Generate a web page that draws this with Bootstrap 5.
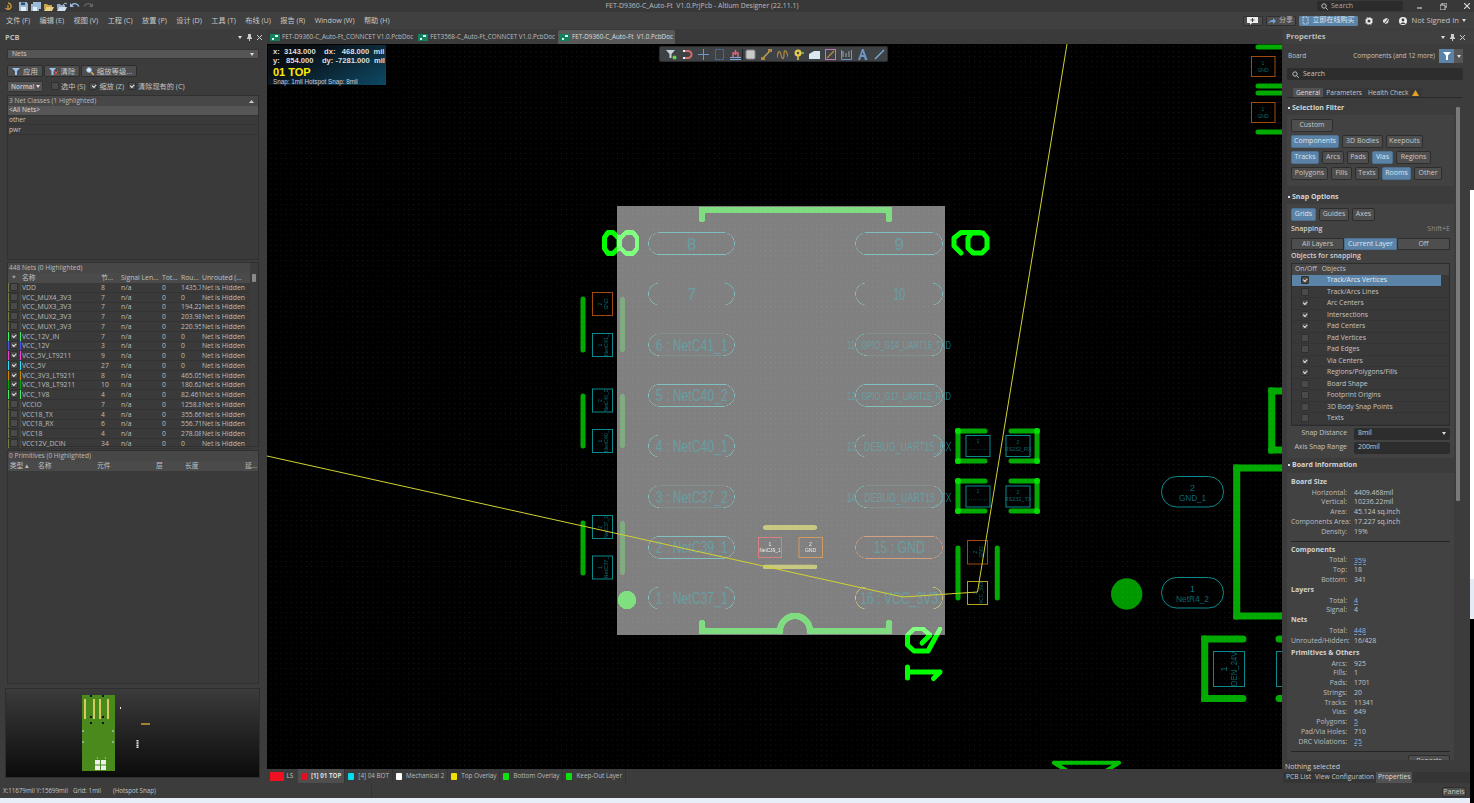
<!DOCTYPE html>
<html lang="zh">
<head>
<meta charset="UTF-8">
<title>FET-D9360-C_Auto-Ft V1.0.PrjPcb - Altium Designer</title>
<link rel="stylesheet" href="https://cdn.jsdelivr.net/npm/bootstrap@5.3.3/dist/css/bootstrap.min.css">
<script src="https://cdn.jsdelivr.net/npm/bootstrap@5.3.3/dist/js/bootstrap.bundle.min.js"></script>
<style>
html,body{width:1474px;height:803px;overflow:hidden;background:#3c3c3c}
body{font-family:"Open Sans","Noto Sans CJK SC",sans-serif;font-size:7px;line-height:1.2;color:#c4c4c4;position:relative}
svg{display:block;flex:none}
.title-bar{height:12px;background:#383838}
.quick-icons{width:100px;padding-left:4px;gap:3px}
.title-text{width:1134px;padding-left:70px;color:#bdbdbd;font-size:6.9px;white-space:pre}
.search-top{width:86px;height:10px;margin-left:83px;background:#2c2c2c;border-radius:2px;padding-left:4px;gap:3px;color:#aaa}
.win-btns{margin-left:14px;gap:17px}
.menu-bar{height:17px;background:#404040;padding-left:6px}
.menu-item{margin-right:9.4px;font-size:7.2px;white-space:nowrap;color:#c8c8c8}
.top-actions{margin-right:8px}
.tb-btn{height:10px;background:#4d4d4d;border:1px solid #2f2f2f;border-radius:1px;gap:3px;color:#bbb;justify-content:center;white-space:nowrap}
.tb-chat{width:20px;margin-right:3px}
.tb-share{width:30px;margin-right:3px}
.tb-buy{background:#5b83a8;border-color:#5b83a8;width:59px;margin-right:7px;color:#dbe5ee;gap:4px}
.act-gap{margin-right:9px}
.user-name{font-size:7.6px;margin-left:5px;margin-right:3px}
.main-area{height:754px}
.left-panel{width:265px;padding:1px 6px 5px 7px;background:#3c3c3c;margin-right:2px}
.panel-title{height:14px;margin:0 -6px 0 -2px;padding:0 3px 0 0;font-weight:700;color:#bbb;font-size:7.5px}
.panel-icons{gap:5px}
.dark-select{height:10px;margin-top:5px;background:#555;border:1px solid #333;border-radius:1px;padding:0 4px;color:#ccc;font-size:6.8px}
.caret-d{width:0;height:0;border:2.5px solid transparent;border-top:3px solid #ddd;border-bottom:0;flex:none}
.ad-btn{--bs-btn-padding-x:0;--bs-btn-padding-y:0;--bs-btn-font-size:7px;--bs-btn-line-height:1.2;--bs-btn-color:#c8c8c8;--bs-btn-bg:#4e4e4e;--bs-btn-border-color:#2d2d2d;--bs-btn-border-radius:2px;--bs-btn-font-weight:400;height:13px;white-space:nowrap;display:inline-flex;align-items:center;justify-content:center;flex:none}
.ad-blue{--bs-btn-bg:#5b83a8;--bs-btn-border-color:#4d7090;--bs-btn-color:#dde6ee}
.bw-21{width:21px}.bw-22{width:22px}.bw-23{width:23px}.bw-24{width:24px}.bw-25{width:25px}.bw-28{width:28px}.bw-29{width:29px}.bw-30{width:30px}.bw-35{width:35px}.bw-36{width:36px}.bw-37{width:37px}.bw-41{width:41px}.bw-42{width:42px}.bw-48{width:48px}.bw-56{width:56px}.bw-59{width:59px}.bw-60{width:60px}
.net-btns{margin-top:6px;gap:1px}
.net-btns .ad-btn{height:12px;gap:3px;font-size:7.4px}
.opt-row{height:11px;margin-top:4px}
.opt-row .dark-select{margin-top:0;width:36px;height:11px;font-weight:600;font-size:6.4px;padding:0 2px 0 3px}
.chk{width:8px;height:8px;background:#4a4a4a;border:1px solid #2f2f2f;border-radius:1px;position:relative;display:block;flex:none}
.chk.on::after{content:"";position:absolute;left:1.2px;top:1px;width:4.4px;height:2.6px;border-left:1px solid #e4e4e4;border-bottom:1px solid #e4e4e4;transform:rotate(-45deg)}
.opt-item{gap:2px;white-space:nowrap;font-size:7.2px}
.list-box{background:#3a3a3a;border:1px solid #303030}
.list-head{height:10px;padding-left:1px;background:#474747;font-size:6.6px;color:#bbb}
.classes-box{height:165px;margin-top:3px}
.class-row{height:9.7px;padding-left:1px;border-bottom:1px solid #333;font-size:6.6px}
.class-row.sel{background:#565656;color:#ddd}
.nets-box{height:185px;margin-top:2px;position:relative;padding-right:8px}
.col-head{height:10px;background:#4a4a4a;font-size:6.8px;color:#c0c0c0}
.col-head span,.net-row span{flex:none;white-space:nowrap;overflow:hidden;line-height:1.35}
.net-row{height:9.75px;border-bottom:1px solid #333;font-size:6.8px;color:#bdbdbd}
.c0{width:14px}.c1{width:79px}.c2{width:20px}.c3{width:41px}.c4{width:19px}.c5{width:20px;margin-right:1px}.c6{width:47px}
.net-swatch{width:13px;height:9px;margin-right:1px;padding:0 .5px;border-left:1.5px solid #78784a;border-right:1.5px solid #4a4a3a;display:block;flex:none}
.s-green{border-color:#45ee66}.s-blue{border-color:#4c55e0}.s-pink{border-color:#ee44cc}.s-cyan{border-color:#33ddee}.s-orange{border-color:#cc8800}.s-dgreen{border-color:#00aa00}
.net-scroll{position:absolute;right:0;top:0;width:8px;height:100%;background:#3c3c3c}
.net-scroll::after{content:"";position:absolute;left:2px;top:11px;width:4px;height:8px;background:#8a8a8a;border-radius:1px}
.prims-box{height:234px;margin-top:3px}
.preview-box{height:90px;margin:4px -1px 0 -2px;background:linear-gradient(#3b3b3b,#0b0b0b);border:1px solid #2e2e2e}
.center-col{width:1015px}
.doc-tabs{height:15px;background:#3a3a3a;padding:1px 0 0 1px;gap:1px}
.doc-tab{height:14px;padding:0 2px;gap:2px;font-size:6.3px;white-space:pre;color:#bcbcbc}
.doc-tab.sel{background:#585858;color:#ddd;border-radius:2px 2px 0 0}
.pcb-wrap{height:725px;background:#000;position:relative;overflow:hidden}
.pcb-canvas{isolation:isolate}
.comp-shade{mix-blend-mode:lighten}
.pcb-canvas text{font-family:"Liberation Sans",sans-serif;text-anchor:middle}
.hud{position:absolute;left:1px;top:1px;width:118px;height:40px;background:linear-gradient(150deg,#0a0d12 25%,#0d4a66);padding:3px 5px;color:#ddd;font-family:"Liberation Sans",sans-serif;font-weight:700;font-size:7.6px;line-height:1.1}
.hud-row{height:9px;white-space:pre}
.hud-layer{color:#ffea00;font-size:11px;height:11px}
.hud-snap{font-size:6.3px;font-weight:400;margin-top:2px;color:#ccd}
.pcb-tools{position:absolute;left:392px;top:2px;width:229px;height:16px;background:#3f4245;border:1px solid #2b2b2b;border-radius:2px;padding-left:3px}
.tool-slot{width:16.35px;display:flex;justify-content:center}
.tool-sep{width:1px;height:11px;background:#222;margin:0 -1px}
.layer-bar{height:14px;background:#3c3c3c;padding-left:3px}
.ls-tab{height:14px;gap:3px;width:28px;font-size:6.4px;white-space:nowrap}
.layer-tab{height:14px;padding:0 3px;gap:4px;white-space:nowrap;font-size:6.3px;border-right:1px solid #333;color:#bbb}
.layer-tab.sel{background:#4e4e4e;color:#ddd;font-weight:700;font-size:6.2px}
.layer-mark{width:6px;height:7px;border-radius:1px;display:block}
.ls-mark{width:13.5px;height:9px;background:#ee1122;display:block}
.right-panel{width:191px;padding:1px 0 0 0;margin-left:1px;background:#3c3c3c;position:relative}
.rp-title{height:14px;padding:0 9px 0 3px;font-weight:700;font-size:7.6px;color:#bbb;background:#404040}
.rp-row{padding:0 11px 0 5px}
.board-row{height:14px;margin-top:5px;font-size:6.4px}
.filter-split{width:24px;height:14px;margin-left:4px}
.filter-a{width:15px;height:14px;background:#5b83a8}
.filter-b{width:9px;height:14px;background:#555}
.search-box{height:12px;margin:5px 11px 0 4px;background:#2d2d2d;border-radius:2px;padding-left:5px;gap:4px}
.rp-tabs{height:10px;margin:8px 12px 0 4px;padding-left:6px;border-bottom:1px solid #2a2a2a}
.rp-tab{height:9px;padding:0 3px;font-size:6.6px;background:#383838;gap:3px;white-space:nowrap}
.rp-tab.sel{background:#525252;color:#ddd}
.sec-head{height:10px;padding-left:5px;gap:2px;font-weight:700;color:#d4d4d4;font-size:7px}
.sec-tick{width:2px;height:2px;background:#ddd;display:block}
.sec-box{width:167px;margin-left:4px;background:#424242;padding:4px}
.sel-head{margin-top:5px}
.sel-box{height:71px;margin-top:2px}
.snap-head-line{margin-top:6px}
.snap-box{height:254px;margin-top:2px}
.info-head-line{margin-top:2px}
.btn-line{gap:3px;margin-bottom:3px}
.seg-line .ad-btn{flex:1 1 0;border-radius:0;height:12px}
.opt-label{font-weight:600;color:#d0d0d0;height:9px}
.objects-label{margin-top:2px}
.snap-table{border:1px solid #2c2c2c;background:#393939;margin-top:2px}
.snap-head{height:11px;background:#464646;padding-left:3px;gap:5px;font-size:6.8px}
.snap-row{height:11.5px;border-bottom:1px solid #343434;font-size:6.8px;position:relative}
.snap-row.sel{background:#5b83a8;color:#e6eef4;margin-right:8px}
.snap-cell{width:26px;display:flex;justify-content:center}
.snap-name{padding-left:9px}
.field-line{height:12px;margin-top:2px;font-size:6.9px}
.field-label{width:56px;text-align:right;margin-right:7px;flex:none;white-space:nowrap}
.field-input{width:96px;height:12px;background:#2d2d2d;border-radius:2px;padding:0 4px;color:#ccc}
.info-box{width:167px;height:287px;margin:3px 0 0 4px;background:#424242;padding:4px;overflow:hidden}
.info-head{height:10px;margin-bottom:1px;font-weight:700;color:#d2d2d2}
.info-head-wide{margin-top:2px}
.info-row{height:9.75px;font-size:6.9px}
.info-key{width:56px;text-align:right;margin-right:7px;flex:none;white-space:nowrap;color:#bdbdbd}
.info-link{color:#8db4de;border-bottom:1px dashed #6c93bd;line-height:7px}
.info-rule{border-top:1px solid #252525;margin:4px 0 3px}
.reports-btn{width:42px;height:12px;margin:1px 0 0 117px;display:flex}
.rp-foot{height:9px;margin-top:3px;padding-left:2px;color:#ccc}
.rp-ftabs{height:11px;background:#353535;padding-left:1px}
.rp-ftab{height:11px;padding:0 2px;font-size:6.7px;white-space:nowrap}
.rp-ftab.sel{background:#525252;color:#ddd}
.rp-scroll{position:absolute;left:173px;top:78px;width:4px;height:394px;background:#7a7a7a;border-radius:1px}
.shift-hint{color:#8e8e8e;font-weight:400}
.status-bar{height:15px;background:#3c3c3c;padding-left:3px;position:relative;font-size:6.2px}
.status-grid{margin-left:5px}
.status-snap{margin-left:12px}
.status-sep{position:absolute;left:371px;top:1px;width:1px;height:14px;background:#333}
.panels-btn{position:absolute;left:1442px;top:4px;width:24px;height:10px}
.bottom-strip{height:5px;background:#e8eef7}
.side-sliver{position:absolute;left:1470px;top:190px;width:4px;height:613px;background:linear-gradient(#fff 0,#fff 389px,#e4ebf5 389px,#e4ebf5 429px,#000 429px)}
.mark-red{background:#e01020}.mark-cyan{background:#00ddee}.mark-white{background:#fff}.mark-yellow{background:#f0e000}.mark-green{background:#10e010}
</style>
</head>
<body>
<header class="title-bar d-flex align-items-center">
  <div class="quick-icons d-flex align-items-center">
    <svg width="8" height="9" viewBox="0 0 8 9"><path d="M4 1a3.2 3.2 0 1 1-2.6 5.2M4 3v4.5" fill="none" stroke="#d09a3c" stroke-width="1.3"/></svg>
    <svg class="ms-1" width="9" height="9" viewBox="0 0 9 9"><path d="M0 0h7.5L9 1.5V9H0z" fill="#9cb9d8"/><rect x="2" y="0.5" width="4" height="2.5" fill="#35506e"/><rect x="2" y="5" width="5" height="4" fill="#e6edf4"/></svg>
    <svg width="10" height="9" viewBox="0 0 10 9"><path d="M2 0h8v7H8v2H0V2h2z" fill="#9cb9d8"/><rect x="2" y="5" width="4" height="4" fill="#e6edf4"/></svg>
    <svg width="10" height="9" viewBox="0 0 10 9"><path d="M0 2h3l1 1h4v2H2L0 8z" fill="#c9a54c"/><path d="M2 5h8L8 9H0z" fill="#e8cf86"/></svg>
    <svg width="10" height="9" viewBox="0 0 10 9"><path d="M0 2h3l1 1h4v2H2L0 8z" fill="#8fa9c4"/><path d="M2 5h8L8 9H0z" fill="#cfe0ef"/><path d="M6 3l2-2 2 1" stroke="#9cb9d8" fill="none"/></svg>
    <svg width="10" height="8" viewBox="0 0 10 8"><path d="M1.500 3.500C3 .8 7 .8 9 4.500" fill="none" stroke="#9cc0e4" stroke-width="1.400"/><path d="M0 1v4h4z" fill="#9cc0e4"/></svg>
    <svg width="10" height="8" viewBox="0 0 10 8"><path d="M8.500 3.500C7 .8 3 .8 1 4.500" fill="none" stroke="#666" stroke-width="1.400"/><path d="M10 1v4H6z" fill="#666"/></svg>
  </div>
  <div class="title-text text-center">FET-D9360-C_Auto-Ft  V1.0.PrjPcb - Altium Designer (22.11.1)</div>
  <div class="search-top d-flex align-items-center">
    <svg width="7" height="7" viewBox="0 0 7 7"><circle cx="3" cy="3" r="2.200" fill="none" stroke="#bbb"/><path d="M4.600 4.600 6.800 6.800" stroke="#bbb"/></svg>Search
  </div>
  <div class="win-btns d-flex align-items-center">
    <svg width="6" height="6" viewBox="0 0 6 6"><path d="M0 5h5" stroke="#ccc" stroke-width="1.200"/></svg>
    <svg width="7" height="7" viewBox="0 0 7 7"><path d="M2 2V0h5v4H5M0 2h5v5H0z" fill="none" stroke="#ccc"/></svg>
    <svg width="6" height="6" viewBox="0 0 6 6"><path d="M0 0l6 6M6 0L0 6" stroke="#ddd" stroke-width="1.100"/></svg>
  </div>
</header>

<nav class="menu-bar d-flex align-items-center">
  <span class="menu-item">文件 (F)</span><span class="menu-item">编辑 (E)</span><span class="menu-item">视图 (V)</span><span class="menu-item">工程 (C)</span><span class="menu-item">放置 (P)</span><span class="menu-item">设计 (D)</span><span class="menu-item">工具 (T)</span><span class="menu-item">布线 (U)</span><span class="menu-item">报告 (R)</span><span class="menu-item">Window (W)</span><span class="menu-item">帮助 (H)</span>
  <div class="top-actions d-flex align-items-center ms-auto">
    <span class="tb-btn tb-chat d-flex align-items-center"><svg width="11" height="8" viewBox="0 0 11 8"><path d="M0 0h11v6H5L3 8V6H0z" fill="#eee"/><path d="M5.500 1v4M3.500 3h4" stroke="#444"/></svg></span>
    <span class="tb-btn tb-share d-flex align-items-center"><svg width="8" height="6" viewBox="0 0 8 6"><path d="M0 6C1 3 3 2 5 2V0l3 3-3 3V4C3 4 1 4 0 6z" fill="#6fa6e0"/></svg>分享</span>
    <span class="tb-btn tb-buy d-flex align-items-center"><svg width="7" height="9" viewBox="0 0 7 9"><path d="M1 1h5v7H1z" fill="none" stroke="#cfe0ef" stroke-dasharray="1.500 1"/></svg>立即在线购买</span>
    <svg class="act-gap" width="8" height="8" viewBox="0 0 8 8"><circle cx="4" cy="4" r="2.400" fill="none" stroke="#eee" stroke-width="1.800"/><circle cx="4" cy="4" r="3.900" fill="none" stroke="#eee" stroke-width=".8" stroke-dasharray="1.500 1.500"/></svg>
    <svg class="act-gap" width="8" height="8" viewBox="0 0 8 8"><path d="M1 3l3-2 3 1-1 4-3 1-2-2z" fill="#ddd"/><path d="M2 7l5-6" stroke="#3f3f3f"/></svg>
    <svg width="8" height="8" viewBox="0 0 8 8"><circle cx="4" cy="4" r="4" fill="#eee"/><circle cx="4" cy="3" r="1.400" fill="#404040"/><path d="M1.500 7C2 5 6 5 6.500 7z" fill="#404040"/></svg>
    <span class="user-name">Not Signed In</span>
    <span class="caret-d"></span>
  </div>
</nav>

<div class="main-area d-flex">
  <aside class="left-panel d-flex flex-column">
    <div class="panel-title d-flex align-items-center justify-content-between">
      <span>PCB</span>
      <span class="panel-icons d-flex align-items-center">
        <span class="caret-d"></span>
        <svg width="5" height="7" viewBox="0 0 5 7"><path d="M1 0h3v3l1 1v1H3v2H2V5H0V4l1-1z" fill="#ccc"/></svg>
        <svg width="5" height="5" viewBox="0 0 5 5"><path d="M0 0l5 5M5 0L0 5" stroke="#ccc"/></svg>
      </span>
    </div>
    <div class="dark-select d-flex align-items-center justify-content-between"><span>Nets</span><span class="caret-d"></span></div>
    <div class="net-btns d-flex">
      <button type="button" class="btn ad-btn bw-36"><svg width="8" height="7" viewBox="0 0 8 7"><path d="M0 0h8L5 3v4H3V3z" fill="#9cc4ec"/></svg>应用</button>
      <button type="button" class="btn ad-btn bw-36"><svg width="9" height="7" viewBox="0 0 9 7"><path d="M0 0h7L4.500 3v4h-2V3z" fill="#9cc4ec"/><path d="M5 3l4 4M9 3L5 7" stroke="#e05050"/></svg>清除</button>
      <button type="button" class="btn ad-btn bw-56"><svg width="8" height="8" viewBox="0 0 8 8"><circle cx="3" cy="3" r="2.300" fill="#dfeaf5" stroke="#9cc4ec"/><path d="M5 5l3 3" stroke="#e0b050" stroke-width="1.400"/></svg>缩放等级...</button>
    </div>
    <div class="opt-row d-flex align-items-center gap-1">
      <div class="dark-select d-flex align-items-center justify-content-between"><span>Normal</span><span class="caret-d"></span></div>
      <span class="opt-item ms-1 d-flex align-items-center"><i class="chk"></i>选中 (S)</span>
      <span class="opt-item d-flex align-items-center"><i class="chk on"></i>缩放 (Z)</span>
      <span class="opt-item d-flex align-items-center"><i class="chk on"></i>清除现有的 (C)</span>
    </div>
    <div class="list-box classes-box">
      <div class="list-head d-flex align-items-center justify-content-between pe-1"><span>3 Net Classes (1 Highlighted)</span><svg width="5" height="3" viewBox="0 0 5 3"><path d="M2.500 0 5 3H0z" fill="#ccc"/></svg></div>
      <div class="class-row sel d-flex align-items-center">&lt;All Nets&gt;</div>
      <div class="class-row d-flex align-items-center">other</div>
      <div class="class-row d-flex align-items-center">pwr</div>
    </div>
    <div class="list-box nets-box">
      <div class="list-head d-flex align-items-center">448 Nets (0 Highlighted)</div>
      <div class="col-head d-flex align-items-center"><span class="c0 ps-1">*</span><span class="c1">名称</span><span class="c2">节...</span><span class="c3">Signal Len...</span><span class="c4">Tot...</span><span class="c5">Rou...</span><span class="c6">Unrouted (...</span></div>
      <div class="net-row d-flex align-items-center"><i class="net-swatch"><i class="chk"></i></i><span class="c1">VDD</span><span class="c2">8</span><span class="c3">n/a</span><span class="c4">0</span><span class="c5">1435.7</span><span class="c6">Net is Hidden</span></div>
      <div class="net-row d-flex align-items-center"><i class="net-swatch"><i class="chk"></i></i><span class="c1">VCC_MUX4_3V3</span><span class="c2">7</span><span class="c3">n/a</span><span class="c4">0</span><span class="c5">0</span><span class="c6">Net is Hidden</span></div>
      <div class="net-row d-flex align-items-center"><i class="net-swatch"><i class="chk"></i></i><span class="c1">VCC_MUX3_3V3</span><span class="c2">7</span><span class="c3">n/a</span><span class="c4">0</span><span class="c5">194.22</span><span class="c6">Net is Hidden</span></div>
      <div class="net-row d-flex align-items-center"><i class="net-swatch"><i class="chk"></i></i><span class="c1">VCC_MUX2_3V3</span><span class="c2">7</span><span class="c3">n/a</span><span class="c4">0</span><span class="c5">203.98</span><span class="c6">Net is Hidden</span></div>
      <div class="net-row d-flex align-items-center"><i class="net-swatch"><i class="chk"></i></i><span class="c1">VCC_MUX1_3V3</span><span class="c2">7</span><span class="c3">n/a</span><span class="c4">0</span><span class="c5">220.95</span><span class="c6">Net is Hidden</span></div>
      <div class="net-row d-flex align-items-center"><i class="net-swatch s-green"><i class="chk on"></i></i><span class="c1">VCC_12V_IN</span><span class="c2">7</span><span class="c3">n/a</span><span class="c4">0</span><span class="c5">0</span><span class="c6">Net is Hidden</span></div>
      <div class="net-row d-flex align-items-center"><i class="net-swatch s-blue"><i class="chk on"></i></i><span class="c1">VCC_12V</span><span class="c2">3</span><span class="c3">n/a</span><span class="c4">0</span><span class="c5">0</span><span class="c6">Net is Hidden</span></div>
      <div class="net-row d-flex align-items-center"><i class="net-swatch s-pink"><i class="chk on"></i></i><span class="c1">VCC_5V_LT9211</span><span class="c2">9</span><span class="c3">n/a</span><span class="c4">0</span><span class="c5">0</span><span class="c6">Net is Hidden</span></div>
      <div class="net-row d-flex align-items-center"><i class="net-swatch s-cyan"><i class="chk on"></i></i><span class="c1">VCC_5V</span><span class="c2">27</span><span class="c3">n/a</span><span class="c4">0</span><span class="c5">0</span><span class="c6">Net is Hidden</span></div>
      <div class="net-row d-flex align-items-center"><i class="net-swatch s-orange"><i class="chk on"></i></i><span class="c1">VCC_3V3_LT9211</span><span class="c2">8</span><span class="c3">n/a</span><span class="c4">0</span><span class="c5">465.05</span><span class="c6">Net is Hidden</span></div>
      <div class="net-row d-flex align-items-center"><i class="net-swatch s-dgreen"><i class="chk on"></i></i><span class="c1">VCC_1V8_LT9211</span><span class="c2">10</span><span class="c3">n/a</span><span class="c4">0</span><span class="c5">180.62</span><span class="c6">Net is Hidden</span></div>
      <div class="net-row d-flex align-items-center"><i class="net-swatch s-green"><i class="chk on"></i></i><span class="c1">VCC_1V8</span><span class="c2">4</span><span class="c3">n/a</span><span class="c4">0</span><span class="c5">82.461</span><span class="c6">Net is Hidden</span></div>
      <div class="net-row d-flex align-items-center"><i class="net-swatch"><i class="chk"></i></i><span class="c1">VCCIO</span><span class="c2">7</span><span class="c3">n/a</span><span class="c4">0</span><span class="c5">1258.8</span><span class="c6">Net is Hidden</span></div>
      <div class="net-row d-flex align-items-center"><i class="net-swatch"><i class="chk"></i></i><span class="c1">VCC18_TX</span><span class="c2">4</span><span class="c3">n/a</span><span class="c4">0</span><span class="c5">355.66</span><span class="c6">Net is Hidden</span></div>
      <div class="net-row d-flex align-items-center"><i class="net-swatch"><i class="chk"></i></i><span class="c1">VCC18_RX</span><span class="c2">6</span><span class="c3">n/a</span><span class="c4">0</span><span class="c5">556.71</span><span class="c6">Net is Hidden</span></div>
      <div class="net-row d-flex align-items-center"><i class="net-swatch"><i class="chk"></i></i><span class="c1">VCC18</span><span class="c2">4</span><span class="c3">n/a</span><span class="c4">0</span><span class="c5">278.08</span><span class="c6">Net is Hidden</span></div>
      <div class="net-row d-flex align-items-center"><i class="net-swatch"><i class="chk"></i></i><span class="c1">VCC12V_DCIN</span><span class="c2">34</span><span class="c3">n/a</span><span class="c4">0</span><span class="c5">0</span><span class="c6">Net is Hidden</span></div>
      <div class="net-scroll"></div>
    </div>
    <div class="list-box prims-box">
      <div class="list-head d-flex align-items-center">0 Primitives (0 Highlighted)</div>
      <div class="col-head d-flex align-items-center"><span class="bw-30">&nbsp;类型 ▴</span><span class="bw-59">名称</span><span class="bw-59">元件</span><span class="bw-29">层</span><span class="bw-60">长度</span><span>延...</span></div>
    </div>
    <div class="preview-box">
      <svg width="252" height="88" viewBox="6 689 252 88">
        <rect x="82" y="695" width="33" height="76" fill="#4a8a1c"/>
        <path d="M85 699v20M94 699v20M100 699v20M108 699v20" stroke="#d8c860" stroke-width="2"/>
        <path d="M91 695v2M103 695v2M91 716v2M103 716v2M91 722v2M103 722v2" stroke="#111" stroke-width="2"/>
        <rect x="95" y="760" width="11" height="10" fill="#eee"/>
        <path d="M95 765h11M100.500 760v10" stroke="#4a8a1c"/>
        <path d="M82 731h2M82 742h2M112 731h2M112 742h2M97 758h1M105 758h1" stroke="#cde" stroke-width="1"/>
        <path d="M141 724h9" stroke="#d0a030" stroke-width="1.500"/>
        <path d="M137.500 740v8" stroke="#eee" stroke-width="2" stroke-dasharray="1.500 .7"/>
        <rect x="120" y="707" width="1" height="2" fill="#eee"/>
      </svg>
    </div>
  </aside>

  <main class="center-col d-flex flex-column">
    <div class="doc-tabs d-flex">
      <div class="doc-tab d-flex align-items-center"><svg width="10" height="7" viewBox="0 0 10 7"><rect width="10" height="7" fill="#14805e"/><rect x="5" y="1" width="3" height="2" fill="#cfe"/><rect x="2" y="4" width="2" height="2" fill="#cfe"/></svg>FET-D9360-C_Auto-Ft_CONNCET V1.0.PcbDoc</div>
      <div class="doc-tab d-flex align-items-center"><svg width="10" height="7" viewBox="0 0 10 7"><rect width="10" height="7" fill="#14805e"/><rect x="5" y="1" width="3" height="2" fill="#cfe"/><rect x="2" y="4" width="2" height="2" fill="#cfe"/></svg>FET3568-C_Auto-Ft_CONNCET V1.0.PcbDoc</div>
      <div class="doc-tab sel d-flex align-items-center"><svg width="10" height="7" viewBox="0 0 10 7"><rect width="10" height="7" fill="#14805e"/><rect x="5" y="1" width="3" height="2" fill="#cfe"/><rect x="2" y="4" width="2" height="2" fill="#cfe"/></svg>FET-D9360-C_Auto-Ft  V1.0.PcbDoc</div>
    </div>
    <div class="pcb-wrap">
      <svg class="pcb-canvas" width="1015" height="725" viewBox="267 44 1015 725">
        <defs>
          <pattern id="gridDots" width="5.100" height="5.100" patternUnits="userSpaceOnUse"><rect width="1" height="1" fill="#fff" fill-opacity=".09"/></pattern>
          <linearGradient id="labelFill" gradientUnits="userSpaceOnUse" x1="617" y1="0" x2="1282" y2="0">
            <stop offset="0" stop-color="#689fa3"/><stop offset=".4932" stop-color="#689fa3"/><stop offset=".4932" stop-color="#0c6a70"/><stop offset="1" stop-color="#0c6a70"/>
          </linearGradient>
        </defs>
        <rect x="267" y="44" width="1015" height="725" fill="#000"/>

        <!-- silkscreen under the highlighted part -->
        <g fill="none" stroke="#00dc00" stroke-width="7" stroke-linecap="round">
          <path d="M702 219V210H889V219"/>
          <path d="M702 623V631H780M810 631H889V623"/>
          <path d="M780 631A15 15 0 0 1 810 631"/>
        </g>
        <circle cx="627" cy="600" r="9.500" fill="#00e000"/>
        <g fill="none" stroke="#c8c800" stroke-width="5" stroke-linecap="round">
          <path d="M765 527.500H815M765 566.700H815"/>
        </g>
        <g fill="none" stroke="#00ff00" stroke-width="5" stroke-linejoin="round" stroke-linecap="round">
          <path d="M608 232.500h5l6 6v9l-6 6h-5l-3.500-5v-11zM626 232.500h7l4 5v11l-4 5h-7l-6-6v-9z"/>
          <path d="M980 232.500H961L954 238V246L961 253M972 233H983L987 238V248L982 253H973L968 248V238Z"/>
          <path d="M940 629 928 651H914L907.500 645V635L914 629H923L930 635 922 643M907.500 667V678M907.500 672H940M940 672 933.500 678.500"/>
        </g>
        <g fill="none" stroke="#00aa00" stroke-width="5" stroke-linecap="round">
          <path d="M583 299V350M622.500 299V350M583 396V446M622.500 396V446M583 523V573M622.500 523V573"/>
          <path d="M958 548V598M997.300 548V598"/>
          <path d="M985 431H958V461H985M985 481H958V511H985M1011 431H1037V461H1011M1011 481H1037V511H1011"/>
          <path d="M1258 47H1282M1258 86H1282M1258 93H1282M1258 132H1282"/>
        </g>
        <g fill="#00e000">
          <circle cx="958" cy="431" r="3"/><circle cx="958" cy="461" r="3"/><circle cx="958" cy="481" r="3"/><circle cx="958" cy="511" r="3"/>
          <circle cx="1037" cy="431" r="3"/><circle cx="1037" cy="461" r="3"/><circle cx="1037" cy="481" r="3"/><circle cx="1037" cy="511" r="3"/>
          <circle cx="1236.700" cy="468" r="3.500"/><circle cx="1236.700" cy="616" r="3.500"/><circle cx="1204.700" cy="639" r="3.500"/><circle cx="1204.700" cy="698.500" r="3.500"/><circle cx="1271.700" cy="391" r="3.500"/><circle cx="1271.700" cy="450" r="3.500"/>
        </g>
        <g fill="none" stroke="#00aa00" stroke-width="7" stroke-linecap="round">
          <path d="M1285 468H1236.700V616H1285M1285 391H1271.700V450H1285"/>
          <path d="M1243 639H1204.700V698.500H1243M1279 639H1285M1279 698.500H1285"/>
        </g>
        <path d="M1054 762.800H1119M1054 762.800 1069 772M1119 762.800 1104 772" fill="none" stroke="#00c000" stroke-width="4" stroke-linecap="round"/>
        <circle cx="1126.700" cy="594" r="15.700" fill="#009900"/>

        <!-- big pads -->
        <g fill="none" stroke="#00c0c0" stroke-width="1.100">
          <rect x="648.500" y="232.500" width="86" height="22" rx="11"/><rect x="855.500" y="232.500" width="87" height="22" rx="11"/>
          <rect x="648.500" y="283" width="86" height="22" rx="11"/><rect x="855.500" y="283" width="87" height="22" rx="11"/>
          <rect x="648.500" y="333.700" width="86" height="22" rx="11"/><rect x="855.500" y="333.700" width="87" height="22" rx="11"/>
          <rect x="648.500" y="384.400" width="86" height="22" rx="11"/><rect x="855.500" y="384.400" width="87" height="22" rx="11"/>
          <rect x="648.500" y="435" width="86" height="22" rx="11"/><rect x="855.500" y="435" width="87" height="22" rx="11"/>
          <rect x="648.500" y="485.700" width="86" height="22" rx="11"/><rect x="855.500" y="485.700" width="87" height="22" rx="11"/>
          <rect x="648.500" y="536.400" width="86" height="22" rx="11"/>
          <rect x="648.500" y="587" width="86" height="22" rx="11"/>
          <rect x="855.500" y="536.400" width="87" height="22" rx="11" stroke="#d0a000"/>
          <rect x="855.500" y="587" width="87" height="22" rx="11" stroke="#cccc20"/>
        </g>

        <rect class="comp-shade" x="617" y="206" width="328" height="429" fill="#808080"/>
        <rect x="267" y="44" width="1015" height="725" fill="url(#gridDots)"/>

        <!-- pads outside the part -->
        <g fill="none" stroke="#0b8a8e" stroke-width="1">
          <rect x="592.500" y="333.500" width="20" height="23"/><rect x="592.500" y="389" width="20" height="23"/><rect x="592.500" y="429.500" width="20" height="23"/><rect x="592.500" y="515.500" width="20" height="23"/><rect x="592.500" y="556" width="20" height="23"/>
          <rect x="966" y="435.500" width="24" height="21"/><rect x="1006" y="435.500" width="24" height="21"/><rect x="966" y="486" width="24" height="21"/><rect x="1006" y="486" width="24" height="21"/>
          <rect x="1213.500" y="651.500" width="31" height="35"/><rect x="1276.500" y="651.500" width="12" height="35"/>
          <rect x="1161.500" y="476.500" width="62" height="30.500" rx="15"/><rect x="1161.500" y="577.500" width="62" height="30.500" rx="15"/>
        </g>
        <g fill="none" stroke="#a04a10" stroke-width="1">
          <rect x="592.500" y="292.500" width="20" height="23"/><rect x="967.500" y="540.500" width="20" height="23.500"/><rect x="1251.500" y="56.500" width="23.500" height="20"/><rect x="1251.500" y="102.500" width="23.500" height="20"/>
        </g>
        <rect x="967.500" y="581.500" width="20" height="23" fill="none" stroke="#b8a020" stroke-width="1"/>
        <rect x="758.500" y="537.500" width="23" height="20" fill="none" stroke="#d88080" stroke-width="1"/>
        <rect x="799" y="537.500" width="23.500" height="20" fill="none" stroke="#d09a60" stroke-width="1"/>

        <!-- pad labels -->
        <g fill="url(#labelFill)" font-size="17">
          <text x="691.500" y="249.500">8</text><text x="899" y="249.500">9</text>
          <text x="691.500" y="300">7</text><text x="899" y="300" textLength="12" lengthAdjust="spacingAndGlyphs">10</text>
          <text x="691.500" y="350.500" textLength="72" lengthAdjust="spacingAndGlyphs">6 : NetC41_1</text>
          <text x="691.500" y="401" textLength="72" lengthAdjust="spacingAndGlyphs">5 : NetC40_2</text>
          <text x="691.500" y="452" textLength="72" lengthAdjust="spacingAndGlyphs">4 : NetC40_1</text>
          <text x="691.500" y="502.500" textLength="72" lengthAdjust="spacingAndGlyphs">3 : NetC37_2</text>
          <text x="691.500" y="553" textLength="72" lengthAdjust="spacingAndGlyphs">2 : NetC39_1</text>
          <text x="691.500" y="604" textLength="72" lengthAdjust="spacingAndGlyphs">1 : NetC37_1</text>
          <text x="899" y="553" textLength="51" lengthAdjust="spacingAndGlyphs">15 : GND</text>
          <text x="899" y="604" textLength="78" lengthAdjust="spacingAndGlyphs">16 : VCC_3V3</text>
          <g font-size="11">
            <text x="899" y="349" textLength="104" lengthAdjust="spacingAndGlyphs">11 : GPIO_G14_UART15_TXD</text>
            <text x="899" y="399.500" textLength="104" lengthAdjust="spacingAndGlyphs">12 : GPIO_G17_UART15_RXD</text>
          </g>
          <g font-size="13">
            <text x="899" y="451" textLength="105" lengthAdjust="spacingAndGlyphs">13 : DEBUG_UART15_RX</text>
            <text x="899" y="502" textLength="105" lengthAdjust="spacingAndGlyphs">14 : DEBUG_UART15_TX</text>
          </g>
        </g>
        <g fill="#0c6a70" font-size="9.500">
          <text x="1192.500" y="491">2</text><text x="1192.500" y="501" textLength="27" lengthAdjust="spacingAndGlyphs">GND_1</text>
          <text x="1192.500" y="592">1</text><text x="1192.500" y="602" textLength="33" lengthAdjust="spacingAndGlyphs">NetR4_2</text>
          <g transform="translate(1229 669) rotate(-90)"><text y="-2">1</text><text y="7.500" textLength="35" lengthAdjust="spacingAndGlyphs">OEN_24V</text></g>
        </g>
        <g fill="#0c6a70" font-size="5">
          <g transform="translate(602.500 304) rotate(-90)"><text y="-1">2</text><text y="5">GND</text></g>
          <g transform="translate(602.500 345) rotate(-90)"><text y="-1">1</text><text y="5" textLength="22" lengthAdjust="spacingAndGlyphs">NetC41_</text></g>
          <g transform="translate(602.500 400.500) rotate(-90)"><text y="-1">2</text><text y="5" textLength="22" lengthAdjust="spacingAndGlyphs">NetC40_2</text></g>
          <g transform="translate(602.500 441) rotate(-90)"><text y="-1">1</text><text y="5" textLength="22" lengthAdjust="spacingAndGlyphs">NetC40_</text></g>
          <g transform="translate(602.500 527) rotate(-90)"><text y="-1">2</text><text y="5" textLength="22" lengthAdjust="spacingAndGlyphs">NetC37_2</text></g>
          <g transform="translate(602.500 567.500) rotate(-90)"><text y="-1">1</text><text y="5" textLength="22" lengthAdjust="spacingAndGlyphs">NetC37_</text></g>
          <g transform="translate(977.500 552) rotate(-90)"><text y="-1">2</text><text y="5">GND</text></g>
          <g transform="translate(977.500 593) rotate(-90)"><text y="-1">1</text><text y="5" textLength="22" lengthAdjust="spacingAndGlyphs">VCC_3V3</text></g>
          <text x="978" y="442.500">1</text><text x="978" y="450" textLength="20" lengthAdjust="spacingAndGlyphs">.........</text>
          <text x="978" y="492.500">1</text><text x="978" y="500" textLength="20" lengthAdjust="spacingAndGlyphs">.........</text>
          <text x="1018" y="444">2</text><text x="1018" y="451" textLength="27" lengthAdjust="spacingAndGlyphs">RS232_RX</text>
          <text x="1018" y="494">2</text><text x="1018" y="501" textLength="27" lengthAdjust="spacingAndGlyphs">RS232_TX</text>
          <text x="1263" y="65">1</text><text x="1263" y="72">GND</text>
          <text x="1263" y="111">1</text><text x="1263" y="118">GND</text>
        </g>
        <g fill="#eee" font-size="5">
          <text x="770" y="545.500">1</text><text x="770" y="552" textLength="21" lengthAdjust="spacingAndGlyphs">NetC39_1</text>
          <text x="810.500" y="545.500">2</text><text x="810.500" y="552">GND</text>
        </g>

        <path d="M267 456 903 597 977.500 592 1067 44" fill="none" stroke="#d2d232" stroke-width="1"/>
      </svg>

      <div class="hud">
        <div class="hud-row">x:  3143.000    dx:   468.000  mil</div>
        <div class="hud-row">y:   854.000    dy: -7281.000  mil</div>
        <div class="hud-row hud-layer">01 TOP</div>
        <div class="hud-row hud-snap">Snap: 1mil Hotspot Snap: 8mil</div>
      </div>

      <div class="pcb-tools d-flex align-items-center">
        <span class="tool-slot"><svg width="11" height="11" viewBox="0 0 11 11"><path d="M0 1h9L5.500 5v4h-2V5z" fill="#c5d2dc"/><circle cx="8.500" cy="8.500" r="2" fill="#6ed24a"/></svg></span>
        <span class="tool-slot"><svg width="11" height="11" viewBox="0 0 11 11"><path d="M1 2h5a3.500 3.500 0 0 1 0 7H1" fill="none" stroke="#d56a6a" stroke-width="2"/><path d="M1 2h2M1 9h2" stroke="#eee" stroke-width="2"/></svg></span>
        <span class="tool-slot"><svg width="11" height="11" viewBox="0 0 11 11"><path d="M5.500 0v11M0 5.500h11" stroke="#6e97c8"/></svg></span>
        <span class="tool-slot"><svg width="11" height="11" viewBox="0 0 11 11"><rect x="1.500" y=".5" width="8" height="10" fill="none" stroke="#5577aa" stroke-dasharray="2 1"/></svg></span>
        <span class="tool-slot"><svg width="11" height="11" viewBox="0 0 11 11"><path d="M0 8.500h11M0 10.500h11" stroke="#7ea7d8"/><path d="M3 8V4h5v4M5.500 1v5" stroke="#d8697a" stroke-width="1.500" fill="none"/></svg></span>
        <i class="tool-sep"></i>
        <span class="tool-slot"><svg width="11" height="11" viewBox="0 0 11 11"><rect x="1" y="1" width="9" height="9" rx="1.500" fill="#c9c9c9" stroke="#888"/></svg></span>
        <span class="tool-slot"><svg width="11" height="11" viewBox="0 0 11 11"><path d="M2 9 9 2" stroke="#b8a060" stroke-width="1.500"/><rect x="7" y="0" width="4" height="3" fill="#b08a40"/><rect x="0" y="8" width="4" height="3" fill="#b08a40"/></svg></span>
        <span class="tool-slot"><svg width="11" height="11" viewBox="0 0 11 11"><path d="M0 9C1 1 3 1 4 6s3 5 3-1 3-3 4 3" fill="none" stroke="#b08a40" stroke-width="1.200"/></svg></span>
        <span class="tool-slot"><svg width="11" height="11" viewBox="0 0 11 11"><circle cx="5" cy="4" r="3.500" fill="#e8c84c"/><circle cx="5" cy="4" r="1.200" fill="#444"/><path d="M5 7v4" stroke="#e8c84c" stroke-width="1.500"/><path d="M8 4h3" stroke="#6ed24a" stroke-width="1.500"/></svg></span>
        <span class="tool-slot"><svg width="11" height="11" viewBox="0 0 11 11"><path d="M0 10V5l5-3h6v8z" fill="#dce6ef"/></svg></span>
        <span class="tool-slot"><svg width="11" height="11" viewBox="0 0 11 11"><rect x=".5" y=".5" width="10" height="10" fill="none" stroke="#c078b8"/><path d="M2 9 9 2" stroke="#b88a40" stroke-width="1.300"/></svg></span>
        <span class="tool-slot"><svg width="11" height="11" viewBox="0 0 11 11"><path d="M.5 1v9.500h10V1" fill="none" stroke="#6e97c8"/><path d="M2 2v6M5 4v4M8 2v6" stroke="#99aabb"/></svg></span>
        <span class="tool-slot"><svg width="11" height="11" viewBox="0 0 11 11"><path d="M1 11 5 0h1.500l4 11H8L7 8H4l-1 3zM4.700 6h1.800L5.600 3z" fill="#6e97c8"/></svg></span>
        <span class="tool-slot"><svg width="11" height="11" viewBox="0 0 11 11"><path d="M1 10 10 1" stroke="#7ea7d8" stroke-width="1.500"/></svg></span>
      </div>
    </div>
    <div class="layer-bar d-flex align-items-center">
      <span class="ls-tab d-flex align-items-center"><i class="ls-mark"></i>LS</span>
      <span class="layer-tab sel d-flex align-items-center"><i class="layer-mark mark-red"></i>[1] 01 TOP</span>
      <span class="layer-tab d-flex align-items-center"><i class="layer-mark mark-cyan"></i>[4] 04 BOT</span>
      <span class="layer-tab d-flex align-items-center"><i class="layer-mark mark-white"></i>Mechanical 2</span>
      <span class="layer-tab d-flex align-items-center"><i class="layer-mark mark-yellow"></i>Top Overlay</span>
      <span class="layer-tab d-flex align-items-center"><i class="layer-mark mark-green"></i>Bottom Overlay</span>
      <span class="layer-tab d-flex align-items-center"><i class="layer-mark mark-green"></i>Keep-Out Layer</span>
    </div>
  </main>

  <aside class="right-panel d-flex flex-column">
    <div class="rp-title d-flex align-items-center justify-content-between">
      <span>Properties</span>
      <span class="panel-icons d-flex align-items-center">
        <span class="caret-d"></span>
        <svg width="5" height="7" viewBox="0 0 5 7"><path d="M1 0h3v3l1 1v1H3v2H2V5H0V4l1-1z" fill="#ccc"/></svg>
        <svg width="5" height="5" viewBox="0 0 5 5"><path d="M0 0l5 5M5 0L0 5" stroke="#ccc"/></svg>
      </span>
    </div>
    <div class="rp-row board-row d-flex align-items-center">
      <span>Board</span><span class="ms-auto">Components (and 12 more)</span>
      <span class="filter-split d-flex">
        <span class="filter-a d-flex align-items-center justify-content-center"><svg width="8" height="8" viewBox="0 0 8 8"><path d="M0 0h8L5 3.500V8H3V3.500z" fill="#fff"/></svg></span>
        <span class="filter-b d-flex align-items-center justify-content-center"><span class="caret-d"></span></span>
      </span>
    </div>
    <div class="search-box d-flex align-items-center"><svg width="7" height="7" viewBox="0 0 7 7"><circle cx="3" cy="3" r="2.200" fill="none" stroke="#bbb"/><path d="M4.600 4.600 6.800 6.800" stroke="#bbb"/></svg>Search</div>
    <div class="rp-tabs d-flex">
      <span class="rp-tab sel d-flex align-items-center">General</span>
      <span class="rp-tab d-flex align-items-center">Parameters</span>
      <span class="rp-tab d-flex align-items-center">Health Check <svg width="7" height="6" viewBox="0 0 7 6"><path d="M3.500 0 7 6H0z" fill="#e8a020"/></svg></span>
    </div>
    <div class="sec-head sel-head d-flex align-items-center"><i class="sec-tick"></i>Selection Filter</div>
    <div class="sec-box sel-box">
      <div class="btn-line d-flex"><button type="button" class="btn ad-btn bw-42">Custom</button></div>
      <div class="btn-line d-flex"><button type="button" class="btn ad-btn ad-blue bw-48">Components</button><button type="button" class="btn ad-btn bw-41">3D Bodies</button><button type="button" class="btn ad-btn bw-37">Keepouts</button></div>
      <div class="btn-line d-flex"><button type="button" class="btn ad-btn ad-blue bw-28">Tracks</button><button type="button" class="btn ad-btn bw-22">Arcs</button><button type="button" class="btn ad-btn bw-22">Pads</button><button type="button" class="btn ad-btn ad-blue bw-21">Vias</button><button type="button" class="btn ad-btn bw-35">Regions</button></div>
      <div class="btn-line d-flex"><button type="button" class="btn ad-btn bw-37">Polygons</button><button type="button" class="btn ad-btn bw-21">Fills</button><button type="button" class="btn ad-btn bw-24">Texts</button><button type="button" class="btn ad-btn ad-blue bw-29">Rooms</button><button type="button" class="btn ad-btn bw-28">Other</button></div>
    </div>
    <div class="sec-head snap-head-line d-flex align-items-center"><i class="sec-tick"></i>Snap Options</div>
    <div class="sec-box snap-box">
      <div class="btn-line d-flex"><button type="button" class="btn ad-btn ad-blue bw-25">Grids</button><button type="button" class="btn ad-btn bw-30">Guides</button><button type="button" class="btn ad-btn bw-23">Axes</button></div>
      <div class="opt-label d-flex align-items-center justify-content-between mt-1"><span>Snapping</span><span class="shift-hint">Shift+E</span></div>
      <div class="seg-line d-flex mt-1"><button type="button" class="btn ad-btn">All Layers</button><button type="button" class="btn ad-btn ad-blue">Current Layer</button><button type="button" class="btn ad-btn">Off</button></div>
      <div class="opt-label objects-label d-flex align-items-center">Objects for snapping</div>
      <div class="snap-table">
        <div class="snap-head d-flex align-items-center"><span>On/Off</span><span>Objects</span></div>
        <div class="snap-row sel d-flex align-items-center"><span class="snap-cell"><i class="chk on"></i></span><span class="snap-name">Track/Arcs Vertices</span></div>
        <div class="snap-row d-flex align-items-center"><span class="snap-cell"><i class="chk"></i></span><span class="snap-name">Track/Arcs Lines</span></div>
        <div class="snap-row d-flex align-items-center"><span class="snap-cell"><i class="chk on"></i></span><span class="snap-name">Arc Centers</span></div>
        <div class="snap-row d-flex align-items-center"><span class="snap-cell"><i class="chk on"></i></span><span class="snap-name">Intersections</span></div>
        <div class="snap-row d-flex align-items-center"><span class="snap-cell"><i class="chk on"></i></span><span class="snap-name">Pad Centers</span></div>
        <div class="snap-row d-flex align-items-center"><span class="snap-cell"><i class="chk"></i></span><span class="snap-name">Pad Vertices</span></div>
        <div class="snap-row d-flex align-items-center"><span class="snap-cell"><i class="chk"></i></span><span class="snap-name">Pad Edges</span></div>
        <div class="snap-row d-flex align-items-center"><span class="snap-cell"><i class="chk on"></i></span><span class="snap-name">Via Centers</span></div>
        <div class="snap-row d-flex align-items-center"><span class="snap-cell"><i class="chk on"></i></span><span class="snap-name">Regions/Polygons/Fills</span></div>
        <div class="snap-row d-flex align-items-center"><span class="snap-cell"><i class="chk"></i></span><span class="snap-name">Board Shape</span></div>
        <div class="snap-row d-flex align-items-center"><span class="snap-cell"><i class="chk"></i></span><span class="snap-name">Footprint Origins</span></div>
        <div class="snap-row d-flex align-items-center"><span class="snap-cell"><i class="chk"></i></span><span class="snap-name">3D Body Snap Points</span></div>
        <div class="snap-row d-flex align-items-center"><span class="snap-cell"><i class="chk"></i></span><span class="snap-name">Texts</span></div>
      </div>
      <div class="field-line d-flex align-items-center"><span class="field-label">Snap Distance</span><span class="field-input d-flex align-items-center justify-content-between">8mil<span class="caret-d"></span></span></div>
      <div class="field-line d-flex align-items-center"><span class="field-label">Axis Snap Range</span><span class="field-input d-flex align-items-center">200mil</span></div>
    </div>
    <div class="sec-head info-head-line d-flex align-items-center"><i class="sec-tick"></i>Board Information</div>
    <div class="info-box">
      <div class="info-head d-flex align-items-center">Board Size</div>
      <div class="info-row d-flex align-items-center"><span class="info-key">Horizontal:</span>4409.468mil</div>
      <div class="info-row d-flex align-items-center"><span class="info-key">Vertical:</span>10236.22mil</div>
      <div class="info-row d-flex align-items-center"><span class="info-key">Area:</span>45.124 sq.inch</div>
      <div class="info-row d-flex align-items-center"><span class="info-key">Components Area:</span>17.227 sq.inch</div>
      <div class="info-row d-flex align-items-center"><span class="info-key">Density:</span>19%</div>
      <div class="info-rule"></div>
      <div class="info-head d-flex align-items-center">Components</div>
      <div class="info-row d-flex align-items-center"><span class="info-key">Total:</span><span class="info-link">359</span></div>
      <div class="info-row d-flex align-items-center"><span class="info-key">Top:</span>18</div>
      <div class="info-row d-flex align-items-center"><span class="info-key">Bottom:</span>341</div>
      <div class="info-head d-flex align-items-center">Layers</div>
      <div class="info-row d-flex align-items-center"><span class="info-key">Total:</span><span class="info-link">4</span></div>
      <div class="info-row d-flex align-items-center"><span class="info-key">Signal:</span>4</div>
      <div class="info-head d-flex align-items-center">Nets</div>
      <div class="info-row d-flex align-items-center"><span class="info-key">Total:</span><span class="info-link">448</span></div>
      <div class="info-row d-flex align-items-center"><span class="info-key">Unrouted/Hidden:</span>16/428</div>
      <div class="info-head info-head-wide d-flex align-items-center">Primitives &amp; Others</div>
      <div class="info-row d-flex align-items-center"><span class="info-key">Arcs:</span>925</div>
      <div class="info-row d-flex align-items-center"><span class="info-key">Fills:</span>1</div>
      <div class="info-row d-flex align-items-center"><span class="info-key">Pads:</span>1701</div>
      <div class="info-row d-flex align-items-center"><span class="info-key">Strings:</span>20</div>
      <div class="info-row d-flex align-items-center"><span class="info-key">Tracks:</span>11341</div>
      <div class="info-row d-flex align-items-center"><span class="info-key">Vias:</span>649</div>
      <div class="info-row d-flex align-items-center"><span class="info-key">Polygons:</span><span class="info-link">5</span></div>
      <div class="info-row d-flex align-items-center"><span class="info-key">Pad/Via Holes:</span>710</div>
      <div class="info-row d-flex align-items-center"><span class="info-key">DRC Violations:</span><span class="info-link">25</span></div>
      <div class="info-rule"></div>
      <button type="button" class="btn ad-btn reports-btn">Reports</button>
    </div>
    <div class="rp-foot d-flex align-items-center">Nothing selected</div>
    <div class="rp-ftabs d-flex align-items-center">
      <span class="rp-ftab d-flex align-items-center">PCB List</span><span class="rp-ftab d-flex align-items-center">View Configuration</span><span class="rp-ftab sel d-flex align-items-center">Properties</span>
    </div>
    <div class="rp-scroll"></div>
  </aside>
</div>

<footer class="status-bar d-flex align-items-center">
  <span>X:11679mil Y:15699mil</span><span class="status-grid">Grid: 1mil</span><span class="status-snap">(Hotspot Snap)</span>
  <i class="status-sep"></i>
  <button type="button" class="btn ad-btn panels-btn">Panels</button>
</footer>
<div class="bottom-strip"></div>
<div class="side-sliver"></div>
</body>
</html>
